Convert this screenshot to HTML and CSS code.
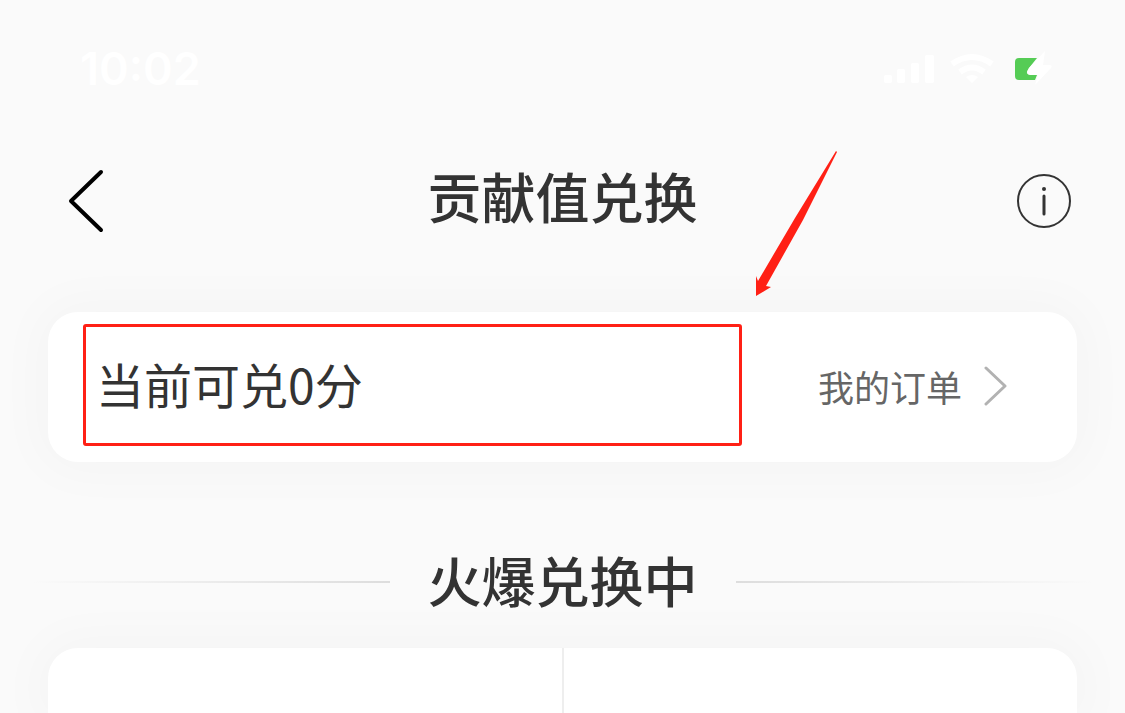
FILE: index.html
```html
<!DOCTYPE html>
<html lang="zh-CN">
<head>
<meta charset="utf-8">
<meta name="viewport" content="width=device-width, initial-scale=1">
<title>贡献值兑换</title>
<link rel="stylesheet" href="styles.css">
</head>

<body>

<div class="status">
  <span class="time">10:02</span>
  <svg class="status-icons" width="196" height="44" viewBox="0 0 196 44" aria-hidden="true">
    <g fill="#fff">
      <rect x="4" y="28" width="8" height="8" rx="2"/>
      <rect x="17" y="22" width="8" height="14" rx="2"/>
      <rect x="31" y="16" width="8" height="20" rx="2"/>
      <rect x="45" y="8" width="9" height="28" rx="2"/>
    </g>
    <g fill="none" stroke="#fff" stroke-width="6">
      <path d="M72 17q20-14 40 0"/>
      <path d="M80 25q12-9 24 0"/>
    </g>
    <path d="M86 30q6-4 12 0l-6 6z" fill="#fff"/>
    <path d="M139 11h18l-8 10q-5 7 2 7h6l-2 5h-16q-4 0-4-4v-14q0-4 4-4z" fill="#5c5"/>
    <path d="M165 4l-16 17q-4 7 2 7h7l-3 10 16-17q2-3-2-3h-6z" fill="#fff"/>
  </svg>
</div>

<header class="navbar">
  <button class="back" type="button" aria-label="返回">
    <svg width="38" height="66" viewBox="0 0 38 66"><path d="M34 4L4 33l30 29"/></svg>
  </button>
  <h1>贡献值兑换</h1>
  <button class="info" type="button" aria-label="说明">
    <svg width="56" height="56" viewBox="0 0 56 56">
      <circle cx="28" cy="28" r="26"/>
      <path d="M28 23v18"/>
      <circle class="dot" cx="28" cy="16" r="2"/>
    </svg>
  </button>
</header>

<main>
  <section class="card points">
    <div class="balance">
      当前可兑0分
      <svg class="arrow" width="84" height="148" viewBox="0 0 84 148" aria-hidden="true">
        <path d="M81 1L40 68 3 131l-2-5v20l15-9-5-1L48 70 82 2z"/>
      </svg>
    </div>
    <a class="orders" href="#">
      我的订单
      <svg width="24" height="42" viewBox="0 0 24 42"><path d="M2 3l19 18L2 39"/></svg>
    </a>
  </section>

  <h2 class="section-title">火爆兑换中</h2>

  <section class="card goods">
    <div class="cell"></div>
    <div class="cell"></div>
  </section>
</main>

</body>
</html>
```

FILE: styles.css
```css
* { box-sizing: border-box; }

body { margin: 0; background: #fafafa; color: #333; font-family: "Noto Sans CJK SC", sans-serif; overflow-x: hidden; }
button { border: 0; padding: 0; background: none; }
svg { display: block; }

.status { display: flex; justify-content: space-between; align-items: center; height: 138px; padding: 0 49px 0 80px; }
.time { color: #fff; font: 600 45px/56px Inter, sans-serif; }

.navbar { display: grid; grid-template-columns: 1fr auto 1fr; align-items: center; height: 126px; padding: 0 53px; }
.navbar h1 { margin: 0; padding-bottom: 10px; font-size: 54px; font-weight: 500; line-height: 80px; }
.back { justify-self: start; padding-left: 14px; }
.info { justify-self: end; }
.back path { fill: none; stroke: #000; stroke-width: 4; stroke-linecap: round; stroke-linejoin: round; }
.info circle, .info path { fill: none; stroke: #333; stroke-width: 2; }
.info path { stroke-width: 3; stroke-linecap: round; }
.info .dot { fill: #333; stroke: none; }

main { padding: 48px 48px 0; }
.card { background: #fff; border-radius: 30px; box-shadow: 0 0 50px 12px rgba(0, 0, 0, 0.025); }

.points { display: flex; align-items: center; padding: 12px 69px 16px 35px; }
.balance { position: relative; flex: 1; height: 122px; padding-left: 10px; border: 3px solid #ff2015; border-radius: 3px; font-size: 48px; line-height: 112px; }
.arrow { position: absolute; right: -100px; top: -177px; fill: #ff2015; }
.orders { display: flex; align-items: center; gap: 22px; margin-left: 76px; padding-top: 2px; color: #666; font-size: 36px; line-height: 52px; text-decoration: none; }
.orders path { fill: none; stroke: #b2b2b2; stroke-width: 3; stroke-linecap: round; stroke-linejoin: round; }

.section-title { display: flex; align-items: center; gap: 38px; margin: 78px -16px 28px; font-size: 54px; font-weight: 500; line-height: 80px; }
.section-title::before, .section-title::after { content: ""; flex: 1; height: 2px; margin-top: 4px; background: linear-gradient(to right, #fafafa, #ddd); }
.section-title::after { background: linear-gradient(to left, #fafafa, #ddd); }

.goods { display: flex; height: 65px; border-radius: 30px 30px 0 0; }
.cell { flex: 1; }
.cell + .cell { border-left: 2px solid #eee; }
```
